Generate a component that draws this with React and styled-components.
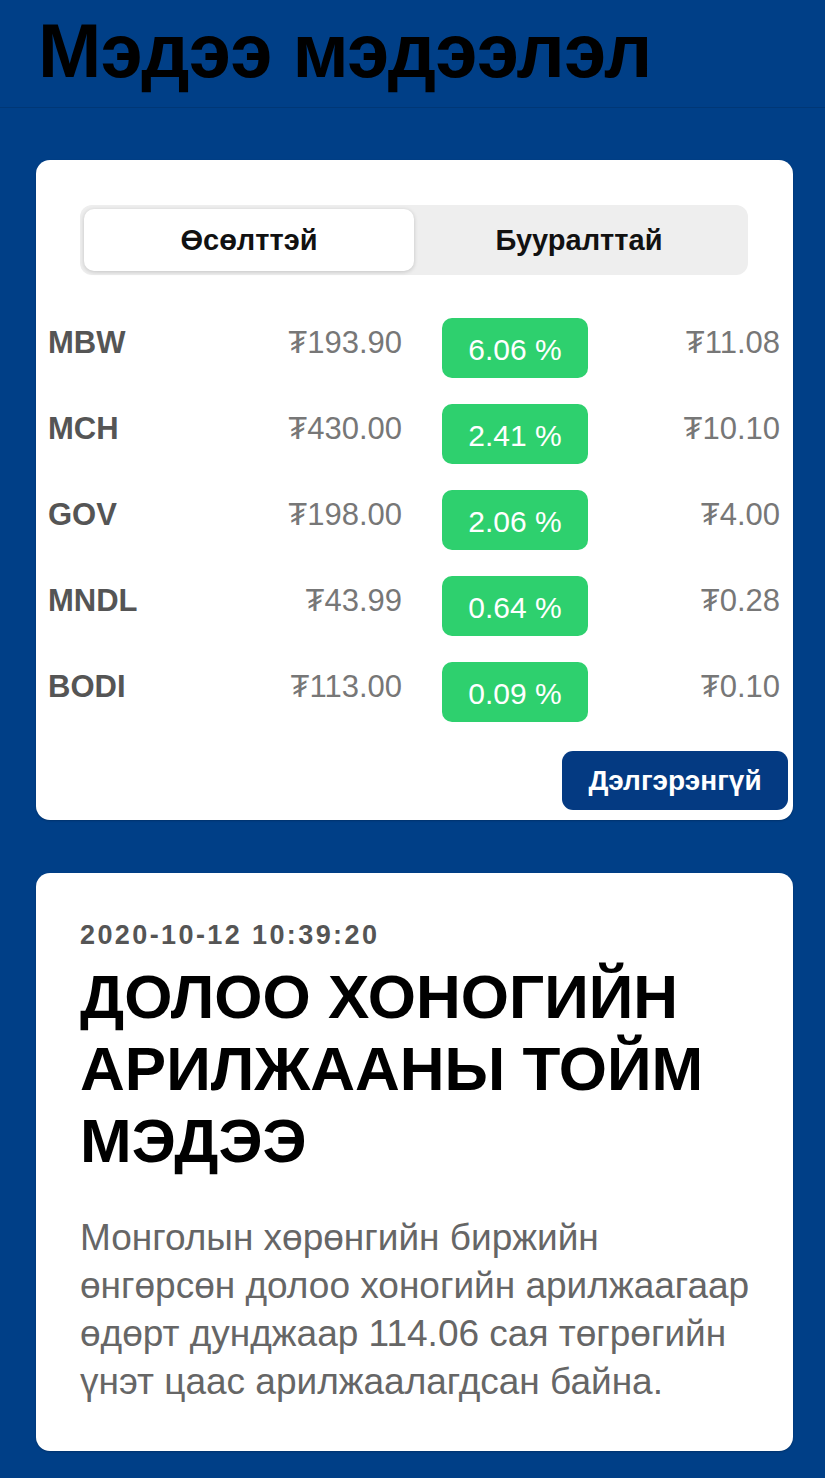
import React, { useState } from 'react';
import styled, { createGlobalStyle } from 'styled-components';

const GlobalStyle = createGlobalStyle`
	body {
		margin: 0;
		background: #003f87;
		font-family: 'Liberation Sans', Arial, 'DejaVu Sans', sans-serif;
	}
`;

const Page = styled.div`
	min-height: 1478px;
	background: #003f87;
	padding-bottom: 28px;
	box-sizing: border-box;
`;

const Header = styled.header`
	padding: 14px 38px 19px;
	border-bottom: 1px solid rgba(0, 0, 0, 0.12);
`;

const Title = styled.h1`
	margin: 0;
	font-size: 76px;
	line-height: 74px;
	font-weight: 700;
	color: #000;
	letter-spacing: -0.5px;
`;

const Card = styled.section`
	background: #fff;
	border-radius: 14px;
	margin: ${(p) => p.$top}px 32px 0 36px;
	padding: ${(p) => p.$padding};
	box-shadow: 0 1px 2px rgba(0, 0, 0, 0.2);
`;

const Segmented = styled.div`
	display: grid;
	grid-template-columns: 1fr 1fr;
	margin: 0 32px;
	padding: 4px;
	height: 70px;
	box-sizing: border-box;
	background: #eeeeee;
	border-radius: 12px;
`;

const Segment = styled.button`
	border: none;
	border-radius: 10px;
	background: ${(p) => (p.$active ? '#fff' : 'transparent')};
	box-shadow: ${(p) => (p.$active ? '0 1px 4px rgba(0, 0, 0, 0.18)' : 'none')};
	font-family: inherit;
	font-size: 29px;
	font-weight: 700;
	color: #111;
	cursor: pointer;
`;

const Rows = styled.div`
	display: flex;
	flex-direction: column;
	gap: 26px;
	margin-top: 43px;
`;

const Row = styled.div`
	display: grid;
	grid-template-columns: 150px 204px 186px 1fr;
	align-items: center;
	height: 60px;
	font-size: 31px;
`;

const Ticker = styled.span`
	font-weight: 700;
	color: #555;
	padding-bottom: 10px;
`;

const Amount = styled.span`
	text-align: right;
	color: #777;
	padding-bottom: 10px;
`;

const Badge = styled.span`
	justify-self: end;
	width: 146px;
	height: 60px;
	display: flex;
	align-items: center;
	justify-content: center;
	background: #2ed06e;
	border-radius: 10px;
	color: #fff;
	font-size: 30px;
	padding-top: 3px;
	box-sizing: border-box;
`;

const Footer = styled.div`
	display: flex;
	justify-content: flex-end;
	margin: 29px -8px 0 0;
`;

const MoreButton = styled.button`
	width: 226px;
	height: 59px;
	border: none;
	border-radius: 11px;
	background: #043a82;
	color: #fff;
	font-family: inherit;
	font-size: 28px;
	font-weight: 700;
	cursor: pointer;
`;

const Date = styled.div`
	font-size: 27px;
	line-height: 30px;
	font-weight: 700;
	letter-spacing: 2.4px;
	color: #555;
`;

const Headline = styled.h2`
	margin: 11px 0 0;
	font-size: 62px;
	line-height: 72px;
	font-weight: 700;
	color: #000;
`;

const Summary = styled.p`
	margin: 37px 0 0;
	font-size: 37px;
	line-height: 48px;
	color: #666;
`;

const stocks = [
	{ ticker: 'MBW', price: '₮193.90', pct: '6.06 %', change: '₮11.08' },
	{ ticker: 'MCH', price: '₮430.00', pct: '2.41 %', change: '₮10.10' },
	{ ticker: 'GOV', price: '₮198.00', pct: '2.06 %', change: '₮4.00' },
	{ ticker: 'MNDL', price: '₮43.99', pct: '0.64 %', change: '₮0.28' },
	{ ticker: 'BODI', price: '₮113.00', pct: '0.09 %', change: '₮0.10' },
];

const App = () => {
	const [tab, setTab] = useState('up');

	return (
		<Page>
			<GlobalStyle />
			<Header>
				<Title>Мэдээ мэдээлэл</Title>
			</Header>
			<Card $top={52} $padding="45px 13px 10px 12px">
				<Segmented>
					<Segment $active={tab === 'up'} onClick={() => setTab('up')}>
						Өсөлттэй
					</Segment>
					<Segment $active={tab === 'down'} onClick={() => setTab('down')}>
						Бууралттай
					</Segment>
				</Segmented>
				<Rows>
					{stocks.map((s) => (
						<Row key={s.ticker}>
							<Ticker>{s.ticker}</Ticker>
							<Amount>{s.price}</Amount>
							<Badge>{s.pct}</Badge>
							<Amount>{s.change}</Amount>
						</Row>
					))}
				</Rows>
				<Footer>
					<MoreButton>Дэлгэрэнгүй</MoreButton>
				</Footer>
			</Card>
			<Card $top={53} $padding="47px 35px 45px 44px">
				<Date>2020-10-12 10:39:20</Date>
				<Headline>ДОЛОО ХОНОГИЙН АРИЛЖААНЫ ТОЙМ МЭДЭЭ</Headline>
				<Summary>
					Монголын хөрөнгийн биржийн өнгөрсөн долоо хоногийн арилжаагаар
					өдөрт дунджаар 114.06 сая төгрөгийн үнэт цаас арилжаалагдсан байна.
				</Summary>
			</Card>
		</Page>
	);
};

export default App;
